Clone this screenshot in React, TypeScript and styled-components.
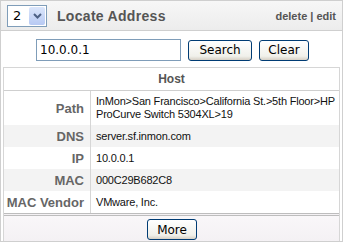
import React from "react";
import styled, { createGlobalStyle } from "styled-components";

const Global = createGlobalStyle`
  html, body { margin: 0; padding: 0; background: #fff; }
  body { font-family: "Liberation Sans", Arial, sans-serif; }
`;

const Panel = styled.div`
  width: 343px;
  height: 242px;
  box-sizing: border-box;
  border: 1px solid #cfcfcf;
  display: flex;
  flex-direction: column;
  overflow: hidden;
`;

const Header = styled.div`
  height: 30px;
  box-sizing: border-box;
  display: flex;
  align-items: center;
  padding: 0 6px 0 6px;
  background: linear-gradient(#f7f7f7, #ececec);
  border-bottom: 1px solid #cfcfcf;
`;

const SelectBox = styled.div`
  width: 40px;
  height: 22px;
  box-sizing: border-box;
  border: 1px solid #7f9db9;
  background: #fff;
  display: flex;
  align-items: center;
  justify-content: space-between;
  padding: 0 1px 0 5px;
  font-family: "DejaVu Sans", sans-serif;
  font-size: 13px;
  color: #000;
`;

const ArrowBtn = styled.div`
  width: 16px;
  height: 18px;
  border-radius: 2px;
  background: linear-gradient(#dbe6fb, #b7c9f3);
  display: flex;
  align-items: center;
  justify-content: center;
`;

const Title = styled.div`
  margin-left: 10px;
  font-weight: bold;
  font-size: 14px;
  color: #555;
  flex: 1;
  letter-spacing: 0.3px;
`;

const Links = styled.div`
  font-size: 11px;
  font-weight: bold;
  color: #555;
`;

const SearchRow = styled.div`
  display: flex;
  align-items: center;
  padding: 6px 0 0 35px;
  height: 26px;
  gap: 6px;
`;

const Input = styled.div`
  width: 145px;
  height: 22px;
  box-sizing: border-box;
  border: 1px solid #7f9db9;
  font-family: "DejaVu Sans", sans-serif;
  font-size: 12px;
  display: flex;
  align-items: center;
  padding-left: 3px;
  color: #000;
`;

const Button = styled.button<{ $w: number }>`
  width: ${(p) => p.$w}px;
  height: 21px;
  box-sizing: border-box;
  border: 1px solid #003c74;
  border-radius: 3px;
  background: linear-gradient(#ffffff, #f0f0ea 80%, #d6d0c5);
  font-family: "DejaVu Sans", sans-serif;
  font-size: 12px;
  color: #000;
  padding: 0;
  margin-left: 1px;
`;

const Table = styled.div`
  margin: 4px 2px 0 2px;
  border: 1px solid #d6d6d6;
  border-bottom: none;
  flex: 1;
  display: flex;
  flex-direction: column;
`;

const HostHead = styled.div`
  height: 22px;
  display: flex;
  align-items: center;
  justify-content: center;
  font-weight: bold;
  font-size: 12px;
  color: #555;
  border-bottom: 1px solid #cfcfcf;
`;

const Row = styled.div<{ $alt?: boolean; $h: number }>`
  display: grid;
  grid-template-columns: 87px 1fr;
  height: ${(p) => p.$h}px;
  background: ${(p) => (p.$alt ? "#f3f3f3" : "#fff")};
`;

const Label = styled.div`
  text-align: right;
  font-weight: bold;
  font-size: 13px;
  color: #666;
  padding-right: 6px;
  border-right: 1px solid #d6d6d6;
  display: flex;
  align-items: center;
  justify-content: flex-end;
`;

const Value = styled.div`
  font-family: "Liberation Sans", Arial, sans-serif;
  font-size: 11px;
  letter-spacing: -0.2px;
  color: #111;
  padding: 0 3px 0 5px;
  display: flex;
  align-items: center;
  line-height: 13px;
`;

const Footer = styled.div`
  margin-top: auto;
  border-top: 3px double #bdbdbd;
  background: linear-gradient(#f9f7f9, #f4f1f4);
  display: flex;
  justify-content: center;
  align-items: flex-start;
  padding-top: 3px;
  flex: 1;
  box-sizing: border-box;
`;

const rows = [
  { k: "Path", v: "InMon>San Francisco>California St.>5th Floor>HP ProCurve Switch 5304XL>19", h: 34 },
  { k: "DNS", v: "server.sf.inmon.com", h: 22, alt: true },
  { k: "IP", v: "10.0.0.1", h: 22 },
  { k: "MAC", v: "000C29B682C8", h: 22, alt: true },
  { k: "MAC Vendor", v: "VMware, Inc.", h: 22 },
];

export default function App() {
  return (
    <>
      <Global />
      <Panel>
        <Header>
          <SelectBox>
            2
            <ArrowBtn>
              <svg width="9" height="6" viewBox="0 0 9 6">
                <path d="M1 1 L4.5 4.5 L8 1" stroke="#4d6185" strokeWidth="2" fill="none" />
              </svg>
            </ArrowBtn>
          </SelectBox>
          <Title>Locate Address</Title>
          <Links>delete | edit</Links>
        </Header>
        <SearchRow>
          <Input>10.0.0.1</Input>
          <Button $w={64}>Search</Button>
          <Button $w={50}>Clear</Button>
        </SearchRow>
        <Table>
          <HostHead>Host</HostHead>
          {rows.map((r) => (
            <Row key={r.k} $alt={r.alt} $h={r.h}>
              <Label>{r.k}</Label>
              <Value>{r.v}</Value>
            </Row>
          ))}
          <Footer>
            <Button $w={50}>More</Button>
          </Footer>
        </Table>
      </Panel>
    </>
  );
}
